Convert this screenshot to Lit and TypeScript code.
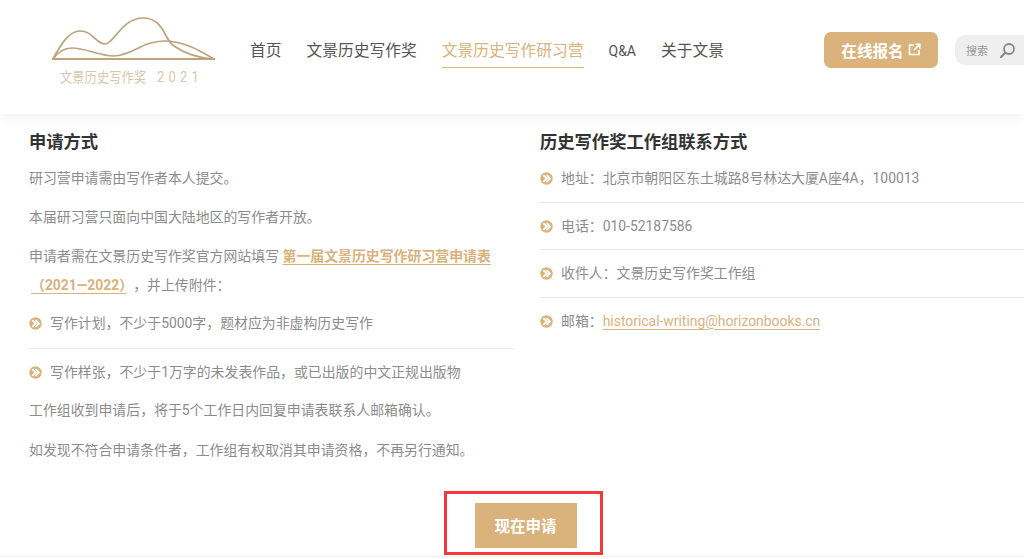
import { LitElement, html, css } from "lit";
import { customElement } from "lit/decorators.js";

const bullet = html`<svg class="bullet" viewBox="0 0 13 13" aria-hidden="true"><circle cx="6.5" cy="6.5" r="6.2" fill="#d9b27c"/><path d="M3.4 3.2 L6.7 6.5 L3.4 9.8 M6.6 3.2 L9.9 6.5 L6.6 9.8" fill="none" stroke="#fff" stroke-width="1.9"/></svg>`;

@customElement("app-root")
export class AppRoot extends LitElement {
  static styles = css`
    :host { display: block; width: 1024px; height: 559px; overflow: hidden; background: #fff; color: #8c8c8c;
      font-family: Roboto, "Noto Sans CJK SC", sans-serif; font-size: 13.9px; }
    * { box-sizing: border-box; }
    header { height: 114px; display: flex; align-items: center; padding: 0 0 14px 52px; background: #fff;
      box-shadow: 0 2px 14px rgba(0,0,0,.07); position: relative; }
    .logo { width: 163px; display: flex; flex-direction: column; align-items: flex-start; }
    .logo svg { width: 163px; height: 44px; display: block; }
    .logo span { color: #d9c7ac; font-size: 12.3px; line-height: 16px; margin-top: 9px; margin-left: 8px; white-space: nowrap; transform: scaleY(1.15); }
    .logo b { font-weight: 400; letter-spacing: 4.2px; margin-left: 11px; font-size: 13px; }
    nav { display: flex; gap: 25px; margin-left: 35px; font-size: 15.75px; color: #555; margin-top: 4px; }
    nav a { line-height: 30px; padding-bottom: 1px; white-space: nowrap; }
    nav a.active { color: #d9b27c; border-bottom: 1px solid #d9b27c; }
    nav a.latin { font-size: 14px; }
    .cta { margin-left: 100px; width: 114px; height: 36px; background: #d9b27c; color: #fff; border-radius: 7px;
      display: flex; align-items: center; justify-content: center; gap: 4px; font-weight: 700; font-size: 15.6px; margin-top: -1px; }
    .cta svg { width: 13px; height: 13px; }
    .search { margin-left: 17px; flex: 1; height: 30px; background: #efefef; border-radius: 10px 0 0 10px;
      display: flex; align-items: center; justify-content: space-between; padding: 0 8px 0 11px; font-size: 11px; color: #999; }
    .search svg { width: 17px; height: 17px; }
    main { display: grid; grid-template-columns: 485px 484px; column-gap: 26px; padding: 14px 0 0 29px; }
    h2 { margin: 0 0 7px; font-size: 17.3px; line-height: 29px; color: #333; font-weight: 700; }
    p { margin: 0 0 10.2px; line-height: 29px; }
    p.lead { margin-bottom: 8.8px; }
    p a { color: #d9b27c; font-weight: 700; text-decoration: underline; text-underline-offset: 3px; }
    p a .tail { padding: 0 7px 0 2px; }
    .item { display: flex; align-items: center; gap: 8px; line-height: 29px; padding-bottom: 9.5px; margin-bottom: 9px; border-bottom: 1px solid #e8e8e8; }
    .item.last { border-bottom: 0; margin-bottom: 0; padding-bottom: 9.7px; }
    .item a { color: #d9b27c; text-decoration: underline; text-underline-offset: 3px; }
    .bullet { width: 13px; height: 13px; flex: none; }
    .right .item { padding-bottom: 8.75px; margin-bottom: 8.75px; }
    .apply { display: flex; justify-content: center; padding-left: 22px; margin-top: 16px; }
    .box { border: 3px solid #f4393c; width: 159px; height: 64px; padding: 9px 23px 0 28px; }
    .box div { height: 45px; background: #d9b27c; color: #fff; font-weight: 700; font-size: 15.5px;
      display: flex; align-items: center; justify-content: center; }
    .foot { border-top: 1px solid #f1f1f1; margin-top: 1px; height: 3px; }
  `;

  render() {
    return html`
      <header>
        <div class="logo">
          <svg viewBox="0 0 163 44" aria-hidden="true"><g fill="none" stroke="#bda27c" stroke-width="1.7" stroke-linecap="round">
            <path d="M1 43 C9 28 17 15 28 15 C41 15 44 28 53 28 C62 28 70 2 91 2 C112 2 112 24 122 30 C132 37 145 42 162 43"/>
            <path d="M1 43 C6 36 12 32 20 32 C34 32 46 40 62 40 C80 40 90 25 112 25 C132 25 148 35 162 43"/>
            <path d="M1 43 H162" stroke-width="2.2"/></g></svg>
          <span>文景历史写作奖<b>2021</b></span>
        </div>
        <nav>
          <a>首页</a><a>文景历史写作奖</a><a class="active">文景历史写作研习营</a><a class="latin">Q&amp;A</a><a>关于文景</a>
        </nav>
        <div class="cta">在线报名
          <svg viewBox="0 0 13 13" aria-hidden="true"><path d="M6 2 H1.5 V11.5 H11 V7 M7.5 1.2 H11.8 V5.5 M11.5 1.5 L6 7" fill="none" stroke="#fff" stroke-width="1.6"/></svg>
        </div>
        <div class="search">搜索
          <svg viewBox="0 0 17 17" aria-hidden="true"><circle cx="10" cy="7" r="5" fill="none" stroke="#888" stroke-width="1.8"/><path d="M6.3 10.7 L2 15" stroke="#888" stroke-width="2.2" stroke-linecap="round"/></svg>
        </div>
      </header>
      <main>
        <section>
          <h2>申请方式</h2>
          <p>研习营申请需由写作者本人提交。</p>
          <p>本届研习营只面向中国大陆地区的写作者开放。</p>
          <p class="lead">申请者需在文景历史写作奖官方网站填写 <a>第一届文景历史写作研习营申请表<span class="tail">（2021—2022）</span></a>，并上传附件：</p>
          <div class="item">${bullet}<span>写作计划，不少于5000字，题材应为非虚构历史写作</span></div>
          <div class="item last">${bullet}<span>写作样张，不少于1万字的未发表作品，或已出版的中文正规出版物</span></div>
          <p>工作组收到申请后，将于5个工作日内回复申请表联系人邮箱确认。</p>
          <p>如发现不符合申请条件者，工作组有权取消其申请资格，不再另行通知。</p>
        </section>
        <section class="right">
          <h2>历史写作奖工作组联系方式</h2>
          <div class="item">${bullet}<span>地址：北京市朝阳区东土城路8号林达大厦A座4A，100013</span></div>
          <div class="item">${bullet}<span>电话：010-52187586</span></div>
          <div class="item">${bullet}<span>收件人：文景历史写作奖工作组</span></div>
          <div class="item last">${bullet}<span>邮箱：<a>historical-writing@horizonbooks.cn</a></span></div>
        </section>
      </main>
      <div class="apply"><div class="box"><div>现在申请</div></div></div>
      <div class="foot"></div>
    `;
  }
}
